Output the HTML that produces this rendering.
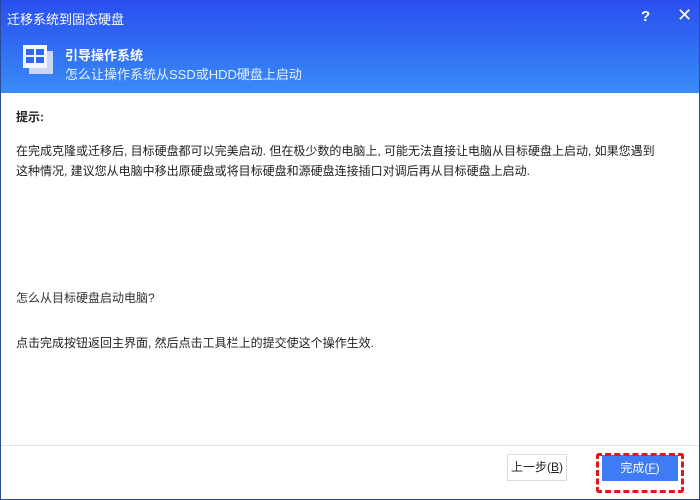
<!DOCTYPE html>
<html><head><meta charset="utf-8"><style>
*{margin:0;padding:0;box-sizing:border-box}
body{width:700px;height:500px;overflow:hidden;font-family:"Liberation Sans","Noto Sans CJK SC",sans-serif;background:#fff;position:relative}
.win{position:absolute;inset:0;border:1px solid #2a4a9a;border-top:none}
.hdr{position:absolute;left:0;top:0;width:700px;height:93px;background:linear-gradient(#2a4ff0,#2f66f2 40%,#3a8cf7)}
.t{position:absolute;left:7px;top:9px;color:#fff;font-size:13px}
.q{position:absolute;left:641px;top:8px;color:#fff;font-size:15px;font-weight:bold}
.x{position:absolute;left:677px;top:5px;color:#fff;font-size:18px}
.h1{position:absolute;left:65px;top:45px;color:#fff;font-size:13px;font-weight:bold}
.h2{position:absolute;left:65px;top:64px;color:#e8f0ff;font-size:13px}
.c{position:absolute;left:16px;font-size:12px;color:#222;line-height:20px}
.sep{position:absolute;left:1px;right:1px;top:445px;height:1px;background:#e2e4e8}
.b1{position:absolute;left:507px;top:454px;width:60px;height:27px;border:1px solid #dcdcdc;font-size:12px;text-align:center;line-height:25px;color:#222;background:#fff}
.b2{position:absolute;left:602px;top:455px;width:76px;height:26px;background:#3f7bf5;color:#fff;font-size:12px;text-align:center;line-height:26px}
.red{position:absolute;left:596px;top:453px;width:88px;height:40px;border:3px dashed #e8141c;border-radius:3px}
</style></head><body>
<div class="hdr"></div>
<div class="t">迁移系统到固态硬盘</div>
<div class="q">?</div><div class="x">✕</div>
<svg style="position:absolute;left:22px;top:44px" width="32" height="32">
<rect x="7" y="7" width="24" height="23" fill="#c9d6f5"/>
<rect x="1" y="1" width="24" height="23" fill="#f4f7ff"/>
<rect x="4" y="5" width="8" height="6" fill="#2f66f2"/><rect x="14" y="5" width="8" height="6" fill="#2f66f2"/>
<rect x="4" y="13" width="8" height="6" fill="#2f66f2"/><rect x="14" y="13" width="8" height="6" fill="#2f66f2"/>
</svg>
<div class="h1">引导操作系统</div>
<div class="h2">怎么让操作系统从SSD或HDD硬盘上启动</div>
<div class="c" style="top:107px;font-weight:bold">提示:</div>
<div class="c" style="top:141px">在完成克隆或迁移后, 目标硬盘都可以完美启动. 但在极少数的电脑上, 可能无法直接让电脑从目标硬盘上启动, 如果您遇到<br>这种情况, 建议您从电脑中移出原硬盘或将目标硬盘和源硬盘连接插口对调后再从目标硬盘上启动.</div>
<div class="c" style="top:288px;color:#333">怎么从目标硬盘启动电脑?</div>
<div class="c" style="top:333px">点击完成按钮返回主界面, 然后点击工具栏上的提交使这个操作生效.</div>
<div class="sep"></div>
<div class="b1">上一步(<u>B</u>)</div>
<div class="b2">完成(<u>F</u>)</div>
<div class="red"></div>
<div class="win"></div>
</body></html>
